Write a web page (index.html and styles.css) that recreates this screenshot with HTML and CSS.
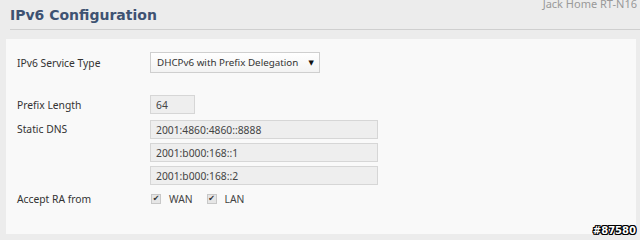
FILE: index.html
```html
<!DOCTYPE html>
<html>
<head>
    <link rel="stylesheet" href="styles.css">
</head>
<body>
    <div class="router-name">Jack Home RT-N16</div>
    <h1 class="page-title">IPv6 Configuration</h1>

    <form class="panel">
        <div class="row row-service">
            <label class="field-label">IPv6 Service Type</label>
            <div class="select-box">
                <span class="select-text">DHCPv6 with Prefix Delegation</span>
                <span class="arrow">&#9660;</span>
            </div>
        </div>

        <div class="row row-prefix">
            <label class="field-label">Prefix Length</label>
            <input type="text" class="text-input short" value="64" readonly>
        </div>

        <div class="row row-dns">
            <label class="field-label">Static DNS</label>
            <div class="dns-list">
                <input type="text" class="text-input long" value="2001:4860:4860::8888" readonly>
                <input type="text" class="text-input long" value="2001:b000:168::1" readonly>
                <input type="text" class="text-input long" value="2001:b000:168::2" readonly>
            </div>
        </div>

        <div class="row row-ra">
            <label class="field-label">Accept RA from</label>
            <div class="checks">
                <label class="check"><span class="box">&#10004;</span>WAN</label>
                <label class="check"><span class="box">&#10004;</span>LAN</label>
            </div>
        </div>
    </form>

    <div class="watermark">#87580</div>
</body>
</html>
```

FILE: styles.css
```css
body {
    margin: 0;
    width: 640px;
    height: 240px;
    overflow: hidden;
    background-color: #ececec;
    font-family: "Noto Sans", "DejaVu Sans", sans-serif;
    font-size: 10.3px;
    color: #333;
    position: relative;
}

.router-name {
    position: absolute;
    top: -4px;
    right: 3px;
    font-size: 11px;
    color: #999;
}

.page-title {
    margin: 0 0 0 10px;
    padding: 7px 0 6px 0;
    border-bottom: 1px solid #cfcfcf;
    font-family: "DejaVu Sans", sans-serif;
    font-size: 14px;
    font-weight: bold;
    color: #3e5272;
}

.panel {
    margin: 9px 4px 0 6px;
    height: 195px;
    background-color: #f9f9f9;
    padding: 13px 0 0 11px;
    box-sizing: border-box;
}

.row {
    display: flex;
    align-items: flex-start;
}

.field-label {
    width: 133px;
    flex-shrink: 0;
}

.row-service {
    align-items: center;
}

.select-box {
    display: flex;
    justify-content: space-between;
    align-items: center;
    width: 170px;
    height: 21px;
    box-sizing: border-box;
    padding: 0 5px 0 6px;
    border: 1px solid #cfcfcf;
    background: linear-gradient(#ffffff, #f3f3f3);
    color: #333;
    white-space: nowrap;
}

.select-text {
    font-size: 9.8px;
}

.select-box .arrow {
    font-family: "DejaVu Sans", sans-serif;
    font-size: 7px;
    color: #111;
}

.row-prefix {
    margin-top: 22px;
    align-items: center;
}

.text-input {
    height: 19px;
    box-sizing: border-box;
    padding: 0 5px;
    border: 1px solid #d6d6d6;
    background-color: #eeeeee;
    font-family: inherit;
    font-size: 10.3px;
    color: #444;
    outline: none;
}

.text-input.short {
    width: 45px;
}

.text-input.long {
    width: 228px;
}

.row-dns {
    margin-top: 6px;
}

.row-dns .field-label {
    padding-top: 2px;
}

.dns-list {
    display: flex;
    flex-direction: column;
    gap: 4px;
}

.row-ra {
    margin-top: 7px;
    align-items: center;
}

.checks {
    display: flex;
    gap: 14px;
    padding-left: 1px;
}

.check {
    display: flex;
    align-items: center;
    gap: 8px;
    color: #444;
}

.box {
    width: 8px;
    height: 8px;
    border: 1px solid #c8c8c8;
    background-color: #e6e6e6;
    font-family: "DejaVu Sans", sans-serif;
    font-size: 8px;
    line-height: 8px;
    text-align: center;
    color: #333;
}

.watermark {
    position: absolute;
    right: 4px;
    bottom: 4px;
    font-family: "DejaVu Sans", sans-serif;
    font-size: 10px;
    font-weight: bold;
    color: #fff;
    text-shadow: 1px 0 0 #000, -1px 0 0 #000, 0 1px 0 #000, 0 -1px 0 #000,
        1px 1px 0 #000, -1px -1px 0 #000, 1px -1px 0 #000, -1px 1px 0 #000;
}
```
